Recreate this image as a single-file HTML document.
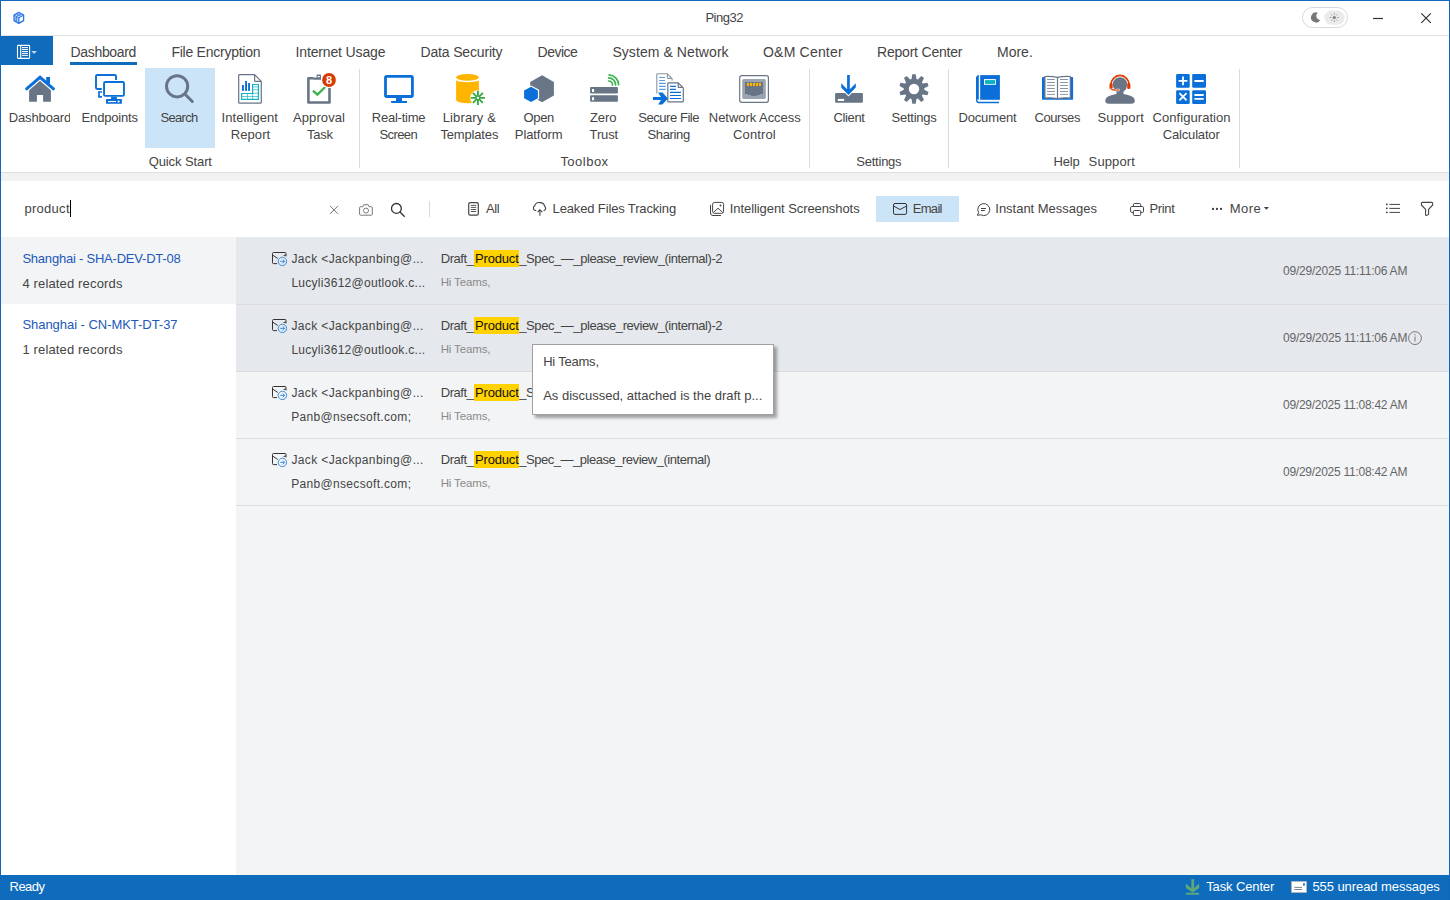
<!DOCTYPE html>
<html><head><meta charset="utf-8"><title>Ping32</title><style>
*{margin:0;padding:0;box-sizing:border-box}
html,body{width:1450px;height:900px;overflow:hidden;background:#fff;font-family:"Liberation Sans",sans-serif}
.t{position:absolute;white-space:nowrap;font-family:"Liberation Sans",sans-serif}
.b{position:absolute}
svg{position:absolute;overflow:visible}
</style></head>
<body>
<div class="b" style="left:1px;top:35px;width:1448px;height:1px;background:#e3e3e3;"></div><div class="b" style="left:1px;top:36px;width:52px;height:29px;background:#0f6cbd;"></div><div class="b" style="left:70px;top:62px;width:67px;height:3px;background:#0f6cbd;"></div><div class="b" style="left:145px;top:68px;width:70px;height:80px;background:#cce4f7;"></div><div class="b" style="left:359px;top:69px;width:1px;height:99px;background:#dcdcdc;"></div><div class="b" style="left:809px;top:69px;width:1px;height:99px;background:#dcdcdc;"></div><div class="b" style="left:948px;top:69px;width:1px;height:99px;background:#dcdcdc;"></div><div class="b" style="left:1239px;top:69px;width:1px;height:99px;background:#dcdcdc;"></div><div class="b" style="left:1px;top:172px;width:1448px;height:1px;background:#dedede;"></div><div class="b" style="left:1px;top:173px;width:1448px;height:8px;background:#f2f2f2;"></div><div class="b" style="left:429px;top:201px;width:1px;height:16px;background:#d9d9d9;"></div><div class="b" style="left:876px;top:196px;width:83px;height:26px;background:#cce4f7;"></div><div class="b" style="left:236px;top:237px;width:1213px;height:638px;background:#f3f4f6;"></div><div class="b" style="left:1px;top:237px;width:235px;height:67px;background:#f3f4f6;"></div><div class="b" style="left:236px;top:237px;width:1213px;height:67px;background:#e5e8ec;"></div><div class="b" style="left:236px;top:305px;width:1213px;height:66px;background:#e5e8ec;"></div><div class="b" style="left:236px;top:304px;width:1213px;height:1px;background:#dddddd;"></div><div class="b" style="left:236px;top:371px;width:1213px;height:1px;background:#dddddd;"></div><div class="b" style="left:236px;top:438px;width:1213px;height:1px;background:#dddddd;"></div><div class="b" style="left:236px;top:505px;width:1213px;height:1px;background:#dddddd;"></div><div class="b" style="left:474px;top:250px;width:45px;height:17px;background:#ffd200;"></div><div class="b" style="left:474px;top:317px;width:45px;height:17px;background:#ffd200;"></div><div class="b" style="left:474px;top:384px;width:45px;height:17px;background:#ffd200;"></div><div class="b" style="left:474px;top:451px;width:45px;height:17px;background:#ffd200;"></div><div class="b" style="left:0px;top:875px;width:1450px;height:25px;background:#0f6cbd;"></div><div class="b" style="left:70px;top:200px;width:1px;height:17px;background:#000;"></div>
<div class="t" style="left:705.40px;top:11.00px;font-size:13px;line-height:13px;letter-spacing:-0.480px;color:#444;">Ping32</div><div class="t" style="left:70.50px;top:44.85px;font-size:14px;line-height:14px;letter-spacing:-0.325px;color:#444;">Dashboard</div><div class="t" style="left:171.40px;top:44.85px;font-size:14px;line-height:14px;letter-spacing:-0.250px;color:#444;">File Encryption</div><div class="t" style="left:295.50px;top:44.85px;font-size:14px;line-height:14px;letter-spacing:-0.142px;color:#444;">Internet Usage</div><div class="t" style="left:420.50px;top:44.85px;font-size:14px;line-height:14px;letter-spacing:-0.163px;color:#444;">Data Security</div><div class="t" style="left:537.60px;top:44.85px;font-size:14px;line-height:14px;letter-spacing:-0.500px;color:#444;">Device</div><div class="t" style="left:612.40px;top:44.85px;font-size:14px;line-height:14px;letter-spacing:0.073px;color:#444;">System &amp; Network</div><div class="t" style="left:763.00px;top:44.85px;font-size:14px;line-height:14px;letter-spacing:0.200px;color:#444;">O&amp;M Center</div><div class="t" style="left:877.00px;top:44.85px;font-size:14px;line-height:14px;letter-spacing:-0.204px;color:#444;">Report Center</div><div class="t" style="left:997.00px;top:44.85px;font-size:14px;line-height:14px;letter-spacing:0.000px;color:#444;">More.</div><div class="t" style="left:8.70px;top:110.80px;font-size:13px;line-height:13px;letter-spacing:-0.125px;color:#444;width:61.80px;overflow:hidden;">Dashboard</div><div class="t" style="left:81.60px;top:110.80px;font-size:13px;line-height:13px;letter-spacing:-0.175px;color:#444;">Endpoints</div><div class="t" style="left:160.40px;top:110.80px;font-size:13px;line-height:13px;letter-spacing:-0.660px;color:#444;">Search</div><div class="t" style="left:221.60px;top:110.80px;font-size:13px;line-height:13px;letter-spacing:0.065px;color:#444;">Intelligent</div><div class="t" style="left:230.75px;top:127.70px;font-size:13px;line-height:13px;letter-spacing:0.080px;color:#444;">Report</div><div class="t" style="left:293.00px;top:110.80px;font-size:13px;line-height:13px;letter-spacing:0.100px;color:#444;">Approval</div><div class="t" style="left:306.90px;top:127.70px;font-size:13px;line-height:13px;letter-spacing:-0.233px;color:#444;">Task</div><div class="t" style="left:371.80px;top:110.80px;font-size:13px;line-height:13px;letter-spacing:-0.237px;color:#444;">Real-time</div><div class="t" style="left:379.40px;top:127.70px;font-size:13px;line-height:13px;letter-spacing:-0.580px;color:#444;">Screen</div><div class="t" style="left:442.70px;top:110.80px;font-size:13px;line-height:13px;letter-spacing:0.138px;color:#444;">Library &amp;</div><div class="t" style="left:440.40px;top:127.70px;font-size:13px;line-height:13px;letter-spacing:-0.156px;color:#444;">Templates</div><div class="t" style="left:523.60px;top:110.80px;font-size:13px;line-height:13px;letter-spacing:-0.400px;color:#444;">Open</div><div class="t" style="left:514.80px;top:127.70px;font-size:13px;line-height:13px;letter-spacing:-0.086px;color:#444;">Platform</div><div class="t" style="left:590.00px;top:110.80px;font-size:13px;line-height:13px;letter-spacing:-0.117px;color:#444;">Zero</div><div class="t" style="left:589.60px;top:127.70px;font-size:13px;line-height:13px;letter-spacing:-0.162px;color:#444;">Trust</div><div class="t" style="left:638.30px;top:110.80px;font-size:13px;line-height:13px;letter-spacing:-0.455px;color:#444;">Secure File</div><div class="t" style="left:647.50px;top:127.70px;font-size:13px;line-height:13px;letter-spacing:-0.367px;color:#444;">Sharing</div><div class="t" style="left:708.80px;top:110.80px;font-size:13px;line-height:13px;letter-spacing:-0.042px;color:#444;">Network Access</div><div class="t" style="left:733.00px;top:127.70px;font-size:13px;line-height:13px;letter-spacing:0.133px;color:#444;">Control</div><div class="t" style="left:833.50px;top:110.80px;font-size:13px;line-height:13px;letter-spacing:-0.350px;color:#444;">Client</div><div class="t" style="left:891.60px;top:110.80px;font-size:13px;line-height:13px;letter-spacing:-0.264px;color:#444;">Settings</div><div class="t" style="left:958.40px;top:110.80px;font-size:13px;line-height:13px;letter-spacing:-0.136px;color:#444;">Document</div><div class="t" style="left:1034.50px;top:110.80px;font-size:13px;line-height:13px;letter-spacing:-0.417px;color:#444;">Courses</div><div class="t" style="left:1097.50px;top:110.80px;font-size:13px;line-height:13px;letter-spacing:0.125px;color:#444;">Support</div><div class="t" style="left:1152.60px;top:110.80px;font-size:13px;line-height:13px;letter-spacing:0.054px;color:#444;">Configuration</div><div class="t" style="left:1162.80px;top:127.70px;font-size:13px;line-height:13px;letter-spacing:-0.178px;color:#444;">Calculator</div><div class="t" style="left:148.70px;top:155.00px;font-size:13px;line-height:13px;letter-spacing:-0.100px;color:#444;">Quick Start</div><div class="t" style="left:560.40px;top:155.00px;font-size:13px;line-height:13px;letter-spacing:0.483px;color:#444;">Toolbox</div><div class="t" style="left:856.30px;top:155.00px;font-size:13px;line-height:13px;letter-spacing:-0.236px;color:#444;">Settings</div><div class="t" style="left:1053.40px;top:155.00px;font-size:13px;line-height:13px;letter-spacing:-0.150px;color:#444;">Help</div><div class="t" style="left:1088.60px;top:155.00px;font-size:13px;line-height:13px;letter-spacing:0.125px;color:#444;">Support</div><div class="t" style="left:24.50px;top:202.20px;font-size:13px;line-height:13px;letter-spacing:0.275px;color:#444;">product</div><div class="t" style="left:486.00px;top:201.90px;font-size:13px;line-height:13px;letter-spacing:-0.425px;color:#444;">All</div><div class="t" style="left:552.60px;top:201.90px;font-size:13px;line-height:13px;letter-spacing:-0.143px;color:#444;">Leaked Files Tracking</div><div class="t" style="left:729.80px;top:201.90px;font-size:13px;line-height:13px;letter-spacing:-0.077px;color:#444;">Intelligent Screenshots</div><div class="t" style="left:912.70px;top:201.90px;font-size:13px;line-height:13px;letter-spacing:-0.675px;color:#444;">Email</div><div class="t" style="left:995.30px;top:201.90px;font-size:13px;line-height:13px;letter-spacing:-0.020px;color:#444;">Instant Messages</div><div class="t" style="left:1149.40px;top:201.90px;font-size:13px;line-height:13px;letter-spacing:-0.338px;color:#444;">Print</div><div class="t" style="left:1229.80px;top:201.90px;font-size:13px;line-height:13px;letter-spacing:0.433px;color:#444;">More</div><div class="t" style="left:22.40px;top:251.80px;font-size:13px;line-height:13px;letter-spacing:-0.217px;color:#2159b9;">Shanghai - SHA-DEV-DT-08</div><div class="t" style="left:22.40px;top:276.80px;font-size:13px;line-height:13px;letter-spacing:0.153px;color:#444;">4 related records</div><div class="t" style="left:22.40px;top:318.10px;font-size:13px;line-height:13px;letter-spacing:-0.039px;color:#2159b9;">Shanghai - CN-MKT-DT-37</div><div class="t" style="left:22.40px;top:342.80px;font-size:13px;line-height:13px;letter-spacing:0.153px;color:#444;">1 related records</div><div class="t" style="left:291.40px;top:252.64px;font-size:12px;line-height:12px;letter-spacing:0.370px;color:#444;">Jack &lt;Jackpanbing@...</div><div class="t" style="left:291.40px;top:277.44px;font-size:12px;line-height:12px;letter-spacing:0.277px;color:#444;">Lucyli3612@outlook.c...</div><div class="t" style="left:440.80px;top:251.90px;font-size:13px;line-height:13px;letter-spacing:-0.490px;color:#444;">Draft_</div><div class="t" style="left:475.00px;top:251.90px;font-size:13px;line-height:13px;letter-spacing:-0.167px;color:#111;">Product</div><div class="t" style="left:519.30px;top:251.90px;font-size:13px;line-height:13px;letter-spacing:-0.433px;color:#444;">_Spec_—_please_review_(internal)-2</div><div class="t" style="left:440.70px;top:277.37px;font-size:11.5px;line-height:11.5px;letter-spacing:-0.138px;color:#8a8a8a;">Hi Teams,</div><div class="t" style="left:1283.00px;top:265.04px;font-size:12px;line-height:12px;letter-spacing:-0.219px;color:#666;">09/29/2025 11:11:06 AM</div><div class="t" style="left:291.40px;top:319.64px;font-size:12px;line-height:12px;letter-spacing:0.370px;color:#444;">Jack &lt;Jackpanbing@...</div><div class="t" style="left:291.40px;top:344.44px;font-size:12px;line-height:12px;letter-spacing:0.277px;color:#444;">Lucyli3612@outlook.c...</div><div class="t" style="left:440.80px;top:318.90px;font-size:13px;line-height:13px;letter-spacing:-0.490px;color:#444;">Draft_</div><div class="t" style="left:475.00px;top:318.90px;font-size:13px;line-height:13px;letter-spacing:-0.167px;color:#111;">Product</div><div class="t" style="left:519.30px;top:318.90px;font-size:13px;line-height:13px;letter-spacing:-0.433px;color:#444;">_Spec_—_please_review_(internal)-2</div><div class="t" style="left:440.70px;top:344.37px;font-size:11.5px;line-height:11.5px;letter-spacing:-0.138px;color:#8a8a8a;">Hi Teams,</div><div class="t" style="left:1283.00px;top:332.04px;font-size:12px;line-height:12px;letter-spacing:-0.219px;color:#666;">09/29/2025 11:11:06 AM</div><div class="t" style="left:291.40px;top:386.64px;font-size:12px;line-height:12px;letter-spacing:0.370px;color:#444;">Jack &lt;Jackpanbing@...</div><div class="t" style="left:291.20px;top:411.44px;font-size:12px;line-height:12px;letter-spacing:0.326px;color:#444;">Panb@nsecsoft.com;</div><div class="t" style="left:440.80px;top:385.90px;font-size:13px;line-height:13px;letter-spacing:-0.490px;color:#444;">Draft_</div><div class="t" style="left:475.00px;top:385.90px;font-size:13px;line-height:13px;letter-spacing:-0.167px;color:#111;">Product</div><div class="t" style="left:519.30px;top:385.90px;font-size:13px;line-height:13px;letter-spacing:-0.433px;color:#444;">_Spec_—_please_review_(internal)-2</div><div class="t" style="left:440.70px;top:411.37px;font-size:11.5px;line-height:11.5px;letter-spacing:-0.138px;color:#8a8a8a;">Hi Teams,</div><div class="t" style="left:1283.00px;top:399.04px;font-size:12px;line-height:12px;letter-spacing:-0.262px;color:#666;">09/29/2025 11:08:42 AM</div><div class="t" style="left:291.40px;top:453.64px;font-size:12px;line-height:12px;letter-spacing:0.370px;color:#444;">Jack &lt;Jackpanbing@...</div><div class="t" style="left:291.20px;top:478.44px;font-size:12px;line-height:12px;letter-spacing:0.326px;color:#444;">Panb@nsecsoft.com;</div><div class="t" style="left:440.80px;top:452.90px;font-size:13px;line-height:13px;letter-spacing:-0.490px;color:#444;">Draft_</div><div class="t" style="left:475.00px;top:452.90px;font-size:13px;line-height:13px;letter-spacing:-0.167px;color:#111;">Product</div><div class="t" style="left:519.30px;top:452.90px;font-size:13px;line-height:13px;letter-spacing:-0.476px;color:#444;">_Spec_—_please_review_(internal)</div><div class="t" style="left:440.70px;top:478.37px;font-size:11.5px;line-height:11.5px;letter-spacing:-0.138px;color:#8a8a8a;">Hi Teams,</div><div class="t" style="left:1283.00px;top:466.04px;font-size:12px;line-height:12px;letter-spacing:-0.262px;color:#666;">09/29/2025 11:08:42 AM</div>
<div class="t" style="left:9.50px;top:880.00px;font-size:13px;line-height:13px;letter-spacing:-0.500px;color:#fff;">Ready</div><div class="t" style="left:1206.20px;top:880.00px;font-size:13px;line-height:13px;letter-spacing:-0.125px;color:#fff;">Task Center</div><div class="t" style="left:1312.40px;top:880.00px;font-size:13px;line-height:13px;letter-spacing:-0.069px;color:#fff;">555 unread messages</div>
<svg style="left:0;top:0" width="1450" height="900" viewBox="0 0 1450 900"><path d="M18.8 12.3 L23.6 15.1 V20.6 L18.8 23.4 L14 20.6 V15.1 Z" fill="#3b82ec" opacity=".35"/><path d="M19.2 17.6 L23.2 15.4 V20.4 L19.2 22.6 Z" fill="#fff"/><g fill="none" stroke="#2a78e4" stroke-linejoin="round"><path d="M18.8 12.3 L23.6 15.1 V20.6 L18.8 23.4 L14 20.6 V15.1 Z" stroke-width="1.3"/><path d="M18.8 17.8 V23.2" stroke-width="1.2"/><path d="M16.2 17 V21.6" stroke-width="1.1"/><path d="M14.3 15.3 L18.8 17.9 L23.4 15.3" stroke-width="1"/><path d="M16.4 13.8 L21 16.4 M21.2 13.7 L16.5 16.4" stroke-width="0.8"/></g><g fill="none" stroke="#fff" stroke-width="1.1"><rect x="17.5" y="45.4" width="12.1" height="13" rx="0.8"/><path d="M20.7 45.5 V58.3"/><path d="M22 47.6 H28 M22 49.5 H28 M22 51.5 H28 M22 53.4 H28 M22 55.4 H28" stroke-width="1"/></g><path d="M31.3 51.1 L36.9 51.1 L34.1 53.9 Z" fill="#fff" opacity=".75"/><rect x="1302.5" y="7.5" width="45" height="20" rx="10" fill="#fff" stroke="#d8d8d8"/><rect x="1324.4" y="10.4" width="20.2" height="14.4" rx="7.2" fill="#ebebeb"/><path d="M1317.8 12.8 A5 5 0 1 0 1320.2 20.2 A4.2 4.2 0 0 1 1317.8 12.8 Z" fill="#777"/><g stroke="#888" stroke-width="0.8"><path d="M1334.3 13 V14.7 M1334.3 20.3 V22 M1329.8 17.5 H1331.5 M1337.1 17.5 H1338.8 M1331.2 14.4 L1332.3 15.5 M1336.3 19.5 L1337.4 20.6 M1331.2 20.6 L1332.3 19.5 M1336.3 15.5 L1337.4 14.4"/></g><circle cx="1334.3" cy="17.5" r="1.6" fill="#7a8290"/><path d="M1373 18.5 H1383" stroke="#333" stroke-width="1.2"/><path d="M1421.3 13.3 L1430.8 22.8 M1430.8 13.3 L1421.3 22.8" stroke="#333" stroke-width="1.2"/><path d="M29.1 90.3 L40 80.8 L50.9 90.3 V101.8 H43.1 V94.9 H36.9 V101.8 H29.1 Z" fill="#687587"/><path d="M26.6 88.8 L40 77.3 L53.5 88.8" fill="none" stroke="#fff" stroke-width="4.6" stroke-linecap="round" stroke-linejoin="miter"/><rect x="46.2" y="77" width="3.8" height="6.5" fill="#0a6fd8"/><path d="M26.6 88.8 L40 77.3 L53.5 88.8" fill="none" stroke="#0a6fd8" stroke-width="3" stroke-linecap="round" stroke-linejoin="miter"/><g fill="none" stroke="#0a6fd8" stroke-width="1.9"><path d="M101.8 89 H97.2 Q96 89 96 87.8 V76.2 Q96 75 97.2 75 H114.8 Q116 75 116 76.2 V80"/><rect x="104.05" y="82.05" width="19.9" height="13.8" rx="1.2"/></g><path d="M102 92 H99 V96.8 H102" fill="none" stroke="#0a6fd8" stroke-width="1.7"/><rect x="111.1" y="96.7" width="5.7" height="2.6" fill="#0a6fd8"/><rect x="106" y="99.1" width="15.9" height="4.7" rx="0.6" fill="#0a6fd8"/><rect x="108" y="101" width="8" height="1.1" fill="#fff"/><circle cx="118.6" cy="101.5" r="1.1" fill="#fff"/><circle cx="177.1" cy="86.3" r="10.6" fill="none" stroke="#687587" stroke-width="3"/><path d="M185.3 94.5 L192.3 101.5" stroke="#687587" stroke-width="3" stroke-linecap="round"/><path d="M239.5 74.6 H254.6 L261.3 81.4 V102.2 Q261.3 103.2 260.3 103.2 H239.5 Q238.7 103.2 238.7 102.4 V75.4 Q238.7 74.6 239.5 74.6 Z M254.6 74.6 V80.4 Q254.6 81.4 255.6 81.4 H261.3" fill="#fff" stroke="#687587" stroke-width="1.2" stroke-linejoin="round"/><g fill="#0a6fd8"><rect x="242" y="85" width="1.9" height="5.9"/><rect x="245.1" y="81" width="1.9" height="9.9"/><rect x="248.1" y="83" width="1.9" height="7.9"/></g><g fill="none" stroke="#14b5c0"><path d="M252.6 84.5 H258.4 V99.4 H241.6 V93.5 H252.6 Z" stroke-width="1.2"/><path d="M252.6 93.5 V99.4 M247.5 93.5 V99.4 M252.6 86.9 H258.4 M252.6 89.7 H258.4 M241.6 96.5 H258.4 M252.6 93.3 H258.4" stroke-width="0.9" opacity=".75"/></g><path d="M313.5 78.3 H308.4 V102.5 H329.5 V88" fill="none" stroke="#687587" stroke-width="2.6" stroke-linejoin="round"/><path d="M313.2 79.7 V77.4 H316.6 V75.4 Q316.6 74.6 317.4 74.6 H320.2 Q321 74.6 321 75.4 V79.7 Z" fill="#687587"/><rect x="317.6" y="76" width="2.2" height="1.2" fill="#fff"/><path d="M313 90.6 L317.4 94.6 L325.2 87" fill="none" stroke="#3fb34f" stroke-width="2.4"/><circle cx="329" cy="80" r="8" fill="#fff"/><circle cx="329" cy="80" r="6.9" fill="#d83b01"/><text x="329" y="84.1" text-anchor="middle" font-family="Liberation Sans" font-weight="bold" font-size="11" fill="#fff">8</text><rect x="385.5" y="76.4" width="26.9" height="20.1" rx="1.2" fill="none" stroke="#0a6fd8" stroke-width="2.8"/><rect x="396" y="97.5" width="6" height="4" fill="#0a6fd8"/><rect x="391.1" y="101" width="15.9" height="2" fill="#0a6fd8"/><path d="M456.1 79.9 A11.4 2.4 0 0 0 478.9 79.9 V100 A11.4 3.2 0 0 1 456.1 100 Z" fill="#ffb400"/><ellipse cx="467.5" cy="77.4" rx="11.4" ry="3.4" fill="#ffb400"/><circle cx="477.9" cy="97.9" r="7.7" fill="#fff"/><g stroke="#3aa845" stroke-width="1.9"><path d="M477.9 90.8 V105 M470.8 97.9 H485 M472.9 92.9 L482.9 102.9 M482.9 92.9 L472.9 102.9"/></g><circle cx="477.9" cy="97.9" r="1.1" fill="#fff"/><path d="M542.1 75.3 L553.9 82 V95.6 L542.1 102.3 L530.2 95.6 V82 Z" fill="#687587"/><path d="M531.1 85.4 L539.1 89.8 V98.9 L531.1 103.3 L523 98.9 V89.8 Z" fill="#fff"/><path d="M531.1 86.7 L537.9 90.5 V98.3 L531.1 102.1 L524.1 98.3 V90.5 Z" fill="#0a6fd8"/><rect x="590.1" y="87.1" width="27.8" height="6.5" rx="0.8" fill="#687587"/><rect x="590.1" y="95.3" width="27.8" height="6.4" rx="0.8" fill="#687587"/><rect x="592" y="89" width="2.1" height="3" fill="#fff"/><rect x="592" y="97.2" width="2.1" height="3" fill="#fff"/><g fill="none" stroke="#3fb34f" stroke-width="1.7" stroke-linecap="round"><path d="M608.6 81 A3.9 3.9 0 0 1 612.5 84.9"/><path d="M608.6 77.9 A7 7 0 0 1 615.6 84.9"/><path d="M609 74.8 A10 10 0 0 1 618.6 84.6"/></g><path d="M656.8 93.5 V74.6 Q656.8 73.8 657.6 73.8 H667.4 L672.1 78.6 V80.6 M667.4 73.8 V77.6 Q667.4 78.4 668.2 78.4 H672.1" fill="none" stroke="#8b95a4" stroke-width="1.1"/><g stroke="#5a9be0" stroke-width="1.1"><path d="M659.1 77.5 H664.9 M659.1 80.5 H664.9 M659.1 83.4 H665.7 M659.1 86.4 H665.7 M659.1 89.4 H665.7"/></g><path d="M667.8 83.4 Q667.8 82.8 668.4 82.8 H678.2 L683.3 87.9 V101.3 Q683.3 101.9 682.7 101.9 H668.4 Q667.8 101.9 667.8 101.3 Z M678.2 82.8 V86.7 Q678.2 87.3 678.8 87.3 H683.3" fill="#fff" stroke="#687587" stroke-width="1.2"/><g stroke="#0a6fd8" stroke-width="1.2"><path d="M670 86.4 H675.9 M670 89.4 H675.9 M670 92.4 H681 M670 95.5 H681 M670 98.5 H681"/></g><path d="M653 97 H661 L658.1 92.4 H662.4 L668 98.5 L662.4 104.6 H658.1 L661 100 H653 Z" fill="#0a6fd8" stroke="#fff" stroke-width="0.0"/><rect x="739.7" y="75.7" width="28.7" height="26.6" rx="2" fill="#fff" stroke="#687587" stroke-width="1.2"/><rect x="742.2" y="79.1" width="23.6" height="19.8" rx="1.6" fill="#9aa3b0"/><path d="M745 82 H762.9 V93.9 H759.9 V94.9 H757 V96 H751 V94.9 H747.9 V93.9 H745 Z" fill="#687587"/><g fill="#ffb400"><rect x="746.9" y="82.9" width="2.1" height="3.1"/><rect x="749.9" y="82.9" width="2.1" height="3.1"/><rect x="752.9" y="82.9" width="2.1" height="3.1"/><rect x="755.9" y="82.9" width="2.1" height="3.1"/><rect x="758.9" y="82.9" width="2.1" height="3.1"/></g><rect x="835.1" y="93" width="27.8" height="9.7" rx="1" fill="#687587"/><rect x="837.8" y="98.9" width="6.3" height="2.1" fill="#fff"/><path d="M848.5 96.5 L839.6 87.5 V82.3 L848.5 91.3 L857.4 82.3 V87.5 Z" fill="#fff"/><path d="M847.1 75.1 H849.8 V89.2 L855.8 83.3 V87.5 L848.5 94.9 L841.2 87.5 V83.3 L847.1 89.2 Z" fill="#0a6fd8"/><path d="M911.51 79.01 L912.32 74.30 L915.68 74.30 L916.49 79.01 L917.86 79.45 L921.29 76.12 L924.00 78.09 L921.89 82.38 L922.73 83.54 L927.47 82.86 L928.50 86.05 L924.27 88.28 L924.27 89.72 L928.50 91.95 L927.47 95.14 L922.73 94.46 L921.89 95.62 L924.00 99.91 L921.29 101.88 L917.86 98.55 L916.49 98.99 L915.68 103.70 L912.32 103.70 L911.51 98.99 L910.14 98.55 L906.71 101.88 L904.00 99.91 L906.11 95.62 L905.27 94.46 L900.53 95.14 L899.50 91.95 L903.73 89.72 L903.73 88.28 L899.50 86.05 L900.53 82.86 L905.27 83.54 L906.11 82.38 L904.00 78.09 L906.71 76.12 L910.14 79.45 Z M919.2 89 A5.2 5.2 0 1 0 908.8 89 A5.2 5.2 0 1 0 919.2 89 Z" fill="#687587" fill-rule="evenodd"/><path d="M976 77 L978 75.1 H978.8 V99.6 H976 Z" fill="#0a6fd8"/><rect x="980.2" y="75.1" width="19.7" height="24.7" fill="#0a6fd8"/><path d="M976.6 99.2 Q976.6 102.5 978.6 102.5 H999" fill="none" stroke="#0a6fd8" stroke-width="1.4"/><rect x="984" y="79.1" width="11.9" height="5.7" fill="#fff"/><rect x="985.1" y="80.1" width="9.9" height="3.8" fill="#00b4c0"/><rect x="1042" y="77" width="31.1" height="22.8" rx="0.8" fill="#0a6fd8"/><path d="M1044.9 76.5 Q1051 76 1057.5 77.3 Q1064 76 1070.3 76.5 V98.1 Q1064 97.3 1057.5 98.6 Q1051 97.3 1044.9 98.1 Z" fill="#fff" stroke="#687587" stroke-width="1.2"/><path d="M1057.5 77.3 V98.6" stroke="#687587" stroke-width="1.2"/><g stroke="#8a94a3" stroke-width="1"><path d="M1047.1 79.5 H1054.9 M1047.1 82.5 H1054.9 M1047.1 85.4 H1054.9 M1047.1 88.5 H1054.9 M1047.1 91.5 H1054.9 M1047.1 94.4 H1054.9 M1060 79.5 H1068 M1060 82.5 H1068 M1060 85.4 H1068 M1060 88.5 H1068 M1060 91.5 H1068 M1060 94.4 H1068"/></g><path d="M1105.3 100.5 Q1105.3 96.5 1112 95 L1116.5 94 V91.5 Q1112.8 89.5 1112.8 83.5 Q1112.8 76.3 1120 76.3 Q1127.2 76.3 1127.2 83.5 Q1127.2 89.5 1123.5 91.5 V94 L1128 95 Q1134.8 96.5 1134.8 100.5 Q1134.8 103.8 1131 103.8 H1109 Q1105.3 103.8 1105.3 100.5 Z" fill="#687587"/><path d="M1111 84.8 A9 9 0 0 1 1129 84.8" fill="none" stroke="#fff" stroke-width="3"/><path d="M1110.8 85.2 A9.2 9.8 0 0 1 1129.2 85.2" fill="none" stroke="#e03c00" stroke-width="1.7"/><rect x="1109.5" y="83.1" width="3.2" height="5.9" rx="1.3" fill="#e03c00"/><rect x="1127.2" y="83.1" width="3.2" height="5.9" rx="1.3" fill="#e03c00"/><path d="M1111.2 89 Q1112.5 90.3 1116 90.3" fill="none" stroke="#fff" stroke-width="2.6"/><path d="M1111.2 89 Q1112.5 90.1 1116 90.1" fill="none" stroke="#e03c00" stroke-width="1.1"/><ellipse cx="1118" cy="90" rx="1.7" ry="1.1" fill="#e03c00" stroke="#fff" stroke-width="0.6"/><g fill="#0a6fd8"><rect x="1176.1" y="74" width="13.6" height="13.7" rx="1.3"/><rect x="1192.2" y="74" width="13.8" height="13.7" rx="1.3"/><rect x="1176.1" y="90.2" width="13.6" height="13.8" rx="1.3"/><rect x="1192.2" y="90.2" width="13.8" height="13.8" rx="1.3"/></g><g stroke="#fff" stroke-width="1.8"><path d="M1178.6 80.9 H1187.4 M1183 76.5 V85.3 M1194.4 81 H1203.7 M1179.4 93.2 L1186.6 100.4 M1186.6 93.2 L1179.4 100.4 M1194.4 95 H1203.7 M1194.4 98.9 H1203.7"/></g><path d="M330 205.9 L338 213.9 M338 205.9 L330 213.9" stroke="#777" stroke-width="1"/><path d="M360.6 206.7 H362.9 L363.8 204.7 H368.2 L369.1 206.7 H371.3 Q372.3 206.7 372.3 207.7 V214.2 Q372.3 215.2 371.3 215.2 H360.6 Q359.6 215.2 359.6 214.2 V207.7 Q359.6 206.7 360.6 206.7 Z" fill="none" stroke="#7a7a7a" stroke-width="1"/><circle cx="366" cy="210.6" r="2.5" fill="none" stroke="#7a7a7a" stroke-width="1"/><circle cx="396.4" cy="208.4" r="4.9" fill="none" stroke="#333" stroke-width="1.3"/><path d="M400 212 L404.7 216.8" stroke="#333" stroke-width="1.3"/><rect x="468.7" y="202.6" width="9.6" height="12.6" rx="1.4" fill="none" stroke="#444" stroke-width="1.2"/><path d="M470.8 205.4 H476.2 M470.8 207.4 H476.2 M470.8 209.5 H476.2 M470.8 211.5 H476.2" stroke="#444" stroke-width="0.9"/><path d="M536.2 210.5 H535.6 A2.4 2.4 0 0 1 534.6 206 A4.8 4.8 0 0 1 540 202.6 A4.6 4.6 0 0 1 544.6 206.3 A2.3 2.3 0 0 1 544 210.5 H543.5" fill="none" stroke="#444" stroke-width="1.1"/><path d="M539.9 209.8 V215.8 M537.5 212.2 L539.9 209.8 L542.3 212.2" fill="none" stroke="#444" stroke-width="1.1"/><g fill="none" stroke="#444" stroke-width="1"><rect x="712.6" y="202.4" width="11" height="10.9" rx="2"/><path d="M713.7 212.3 L718 208.2 L722.6 212.3"/><path d="M710.5 204.8 V213 Q710.5 215.5 713 215.5 H721"/></g><circle cx="720.5" cy="205.5" r="0.9" fill="#444"/><rect x="893.5" y="203.5" width="13.1" height="10.9" rx="1.5" fill="none" stroke="#333" stroke-width="1"/><path d="M893.6 206.1 L900 209.5 L906.5 206.1" fill="none" stroke="#333" stroke-width="1"/><path d="M978.6 212.6 A6 6 0 1 1 980.8 214.8 L977.4 215.3 Z" fill="none" stroke="#444" stroke-width="1"/><path d="M981 208.5 H985.9 M981 210.5 H984.8" stroke="#444" stroke-width="1"/><g fill="none" stroke="#444" stroke-width="1"><path d="M1133.4 206.4 V204.8 Q1133.4 203.5 1134.7 203.5 H1139.4 Q1140.7 203.5 1140.7 204.8 V206.4"/><path d="M1133.4 212.4 H1131.7 Q1130.6 212.4 1130.6 211.3 V207.7 Q1130.6 206.5 1131.8 206.5 H1142.3 Q1143.5 206.5 1143.5 207.7 V211.3 Q1143.5 212.4 1142.4 212.4 H1140.7"/><rect x="1133.4" y="210.5" width="7.3" height="5" rx="1"/></g><g fill="#444"><rect x="1212" y="207.9" width="2" height="2"/><rect x="1216" y="207.9" width="2" height="2"/><rect x="1220" y="207.9" width="2" height="2"/></g><path d="M1263.8 207 H1269 L1266.4 209.8 Z" fill="#444"/><g fill="#444"><rect x="1386" y="203.6" width="1.6" height="1.6"/><rect x="1386" y="207.6" width="1.6" height="1.6"/><rect x="1386" y="211.6" width="1.6" height="1.6"/></g><path d="M1389.4 204.4 H1400 M1389.4 208.4 H1400 M1389.4 212.4 H1400" stroke="#444" stroke-width="1"/><path d="M1422.3 202.4 H1431.7 Q1432.7 202.4 1432.7 203.6 V205 L1428.6 209.3 V214.4 L1426.9 215.4 Q1425.6 215.6 1425.6 214.6 V209.3 L1421.4 205 V203.6 Q1421.4 202.4 1422.3 202.4 Z" fill="none" stroke="#444" stroke-width="1.1" stroke-linejoin="round"/><g transform="translate(0 0)"><path d="M277 263.6 H273.5 Q272.5 263.6 272.5 262.6 V253.5 Q272.5 252.5 273.5 252.5 H285 Q286 252.5 286 253.5 V256.4" fill="none" stroke="#333" stroke-width="1"/><path d="M272.8 255.2 L277.8 258.5" stroke="#333" stroke-width="1"/><path d="M283.6 255.5 L286 255" stroke="#333" stroke-width="1"/><circle cx="282.4" cy="261.4" r="5.4" fill="#e5e8ec"/><circle cx="282.4" cy="261.4" r="4.2" fill="none" stroke="#3b8fe0" stroke-width="1"/><path d="M280.2 261.4 H284.5 M282.7 259.5 L284.7 261.4 L282.7 263.4" fill="none" stroke="#3b8fe0" stroke-width="1"/></g><g transform="translate(0 67)"><path d="M277 263.6 H273.5 Q272.5 263.6 272.5 262.6 V253.5 Q272.5 252.5 273.5 252.5 H285 Q286 252.5 286 253.5 V256.4" fill="none" stroke="#333" stroke-width="1"/><path d="M272.8 255.2 L277.8 258.5" stroke="#333" stroke-width="1"/><path d="M283.6 255.5 L286 255" stroke="#333" stroke-width="1"/><circle cx="282.4" cy="261.4" r="5.4" fill="#e5e8ec"/><circle cx="282.4" cy="261.4" r="4.2" fill="none" stroke="#3b8fe0" stroke-width="1"/><path d="M280.2 261.4 H284.5 M282.7 259.5 L284.7 261.4 L282.7 263.4" fill="none" stroke="#3b8fe0" stroke-width="1"/></g><g transform="translate(0 134)"><path d="M277 263.6 H273.5 Q272.5 263.6 272.5 262.6 V253.5 Q272.5 252.5 273.5 252.5 H285 Q286 252.5 286 253.5 V256.4" fill="none" stroke="#333" stroke-width="1"/><path d="M272.8 255.2 L277.8 258.5" stroke="#333" stroke-width="1"/><path d="M283.6 255.5 L286 255" stroke="#333" stroke-width="1"/><circle cx="282.4" cy="261.4" r="5.4" fill="#f3f4f6"/><circle cx="282.4" cy="261.4" r="4.2" fill="none" stroke="#3b8fe0" stroke-width="1"/><path d="M280.2 261.4 H284.5 M282.7 259.5 L284.7 261.4 L282.7 263.4" fill="none" stroke="#3b8fe0" stroke-width="1"/></g><g transform="translate(0 201)"><path d="M277 263.6 H273.5 Q272.5 263.6 272.5 262.6 V253.5 Q272.5 252.5 273.5 252.5 H285 Q286 252.5 286 253.5 V256.4" fill="none" stroke="#333" stroke-width="1"/><path d="M272.8 255.2 L277.8 258.5" stroke="#333" stroke-width="1"/><path d="M283.6 255.5 L286 255" stroke="#333" stroke-width="1"/><circle cx="282.4" cy="261.4" r="5.4" fill="#f3f4f6"/><circle cx="282.4" cy="261.4" r="4.2" fill="none" stroke="#3b8fe0" stroke-width="1"/><path d="M280.2 261.4 H284.5 M282.7 259.5 L284.7 261.4 L282.7 263.4" fill="none" stroke="#3b8fe0" stroke-width="1"/></g><circle cx="1415" cy="338.1" r="6.4" fill="none" stroke="#777" stroke-width="1"/><rect x="1414.4" y="336.5" width="1.2" height="5" fill="#888"/><rect x="1414.4" y="334.1" width="1.2" height="1.2" fill="#888"/><g fill="#5fa87a"><rect x="1191.4" y="879.2" width="2.7" height="10"/><path d="M1185.9 883.6 L1192.7 889.6 L1199.1 883.6 V888 L1192.7 892.4 L1185.9 888 Z"/><rect x="1185.9" y="892.8" width="13.2" height="1.9"/></g><rect x="1291.6" y="881.5" width="15" height="10.9" fill="#fff" stroke="#b8b8b8" stroke-width="0.8"/><path d="M1294.3 887.4 H1302 M1294.3 889.5 H1302" stroke="#6a7484" stroke-width="0.9"/><rect x="1303.1" y="883.3" width="1.7" height="2.3" fill="#1066c0"/></svg>
<div class="b" style="left:532px;top:344px;width:242px;height:71px;background:#fff;border:1px solid #a0a0a0;box-shadow:3px 3px 3px rgba(0,0,0,.35)"></div>
<div class="t" style="left:543.20px;top:354.90px;font-size:13px;line-height:13px;letter-spacing:-0.219px;color:#444;">Hi Teams,</div><div class="t" style="left:543.20px;top:388.50px;font-size:13px;line-height:13px;letter-spacing:-0.014px;color:#444;">As discussed, attached is the draft p...</div>
<div class="b" style="left:0;top:0;width:1450px;height:900px;border:1px solid #1067bf;border-bottom:none;pointer-events:none"></div>
</body></html>
